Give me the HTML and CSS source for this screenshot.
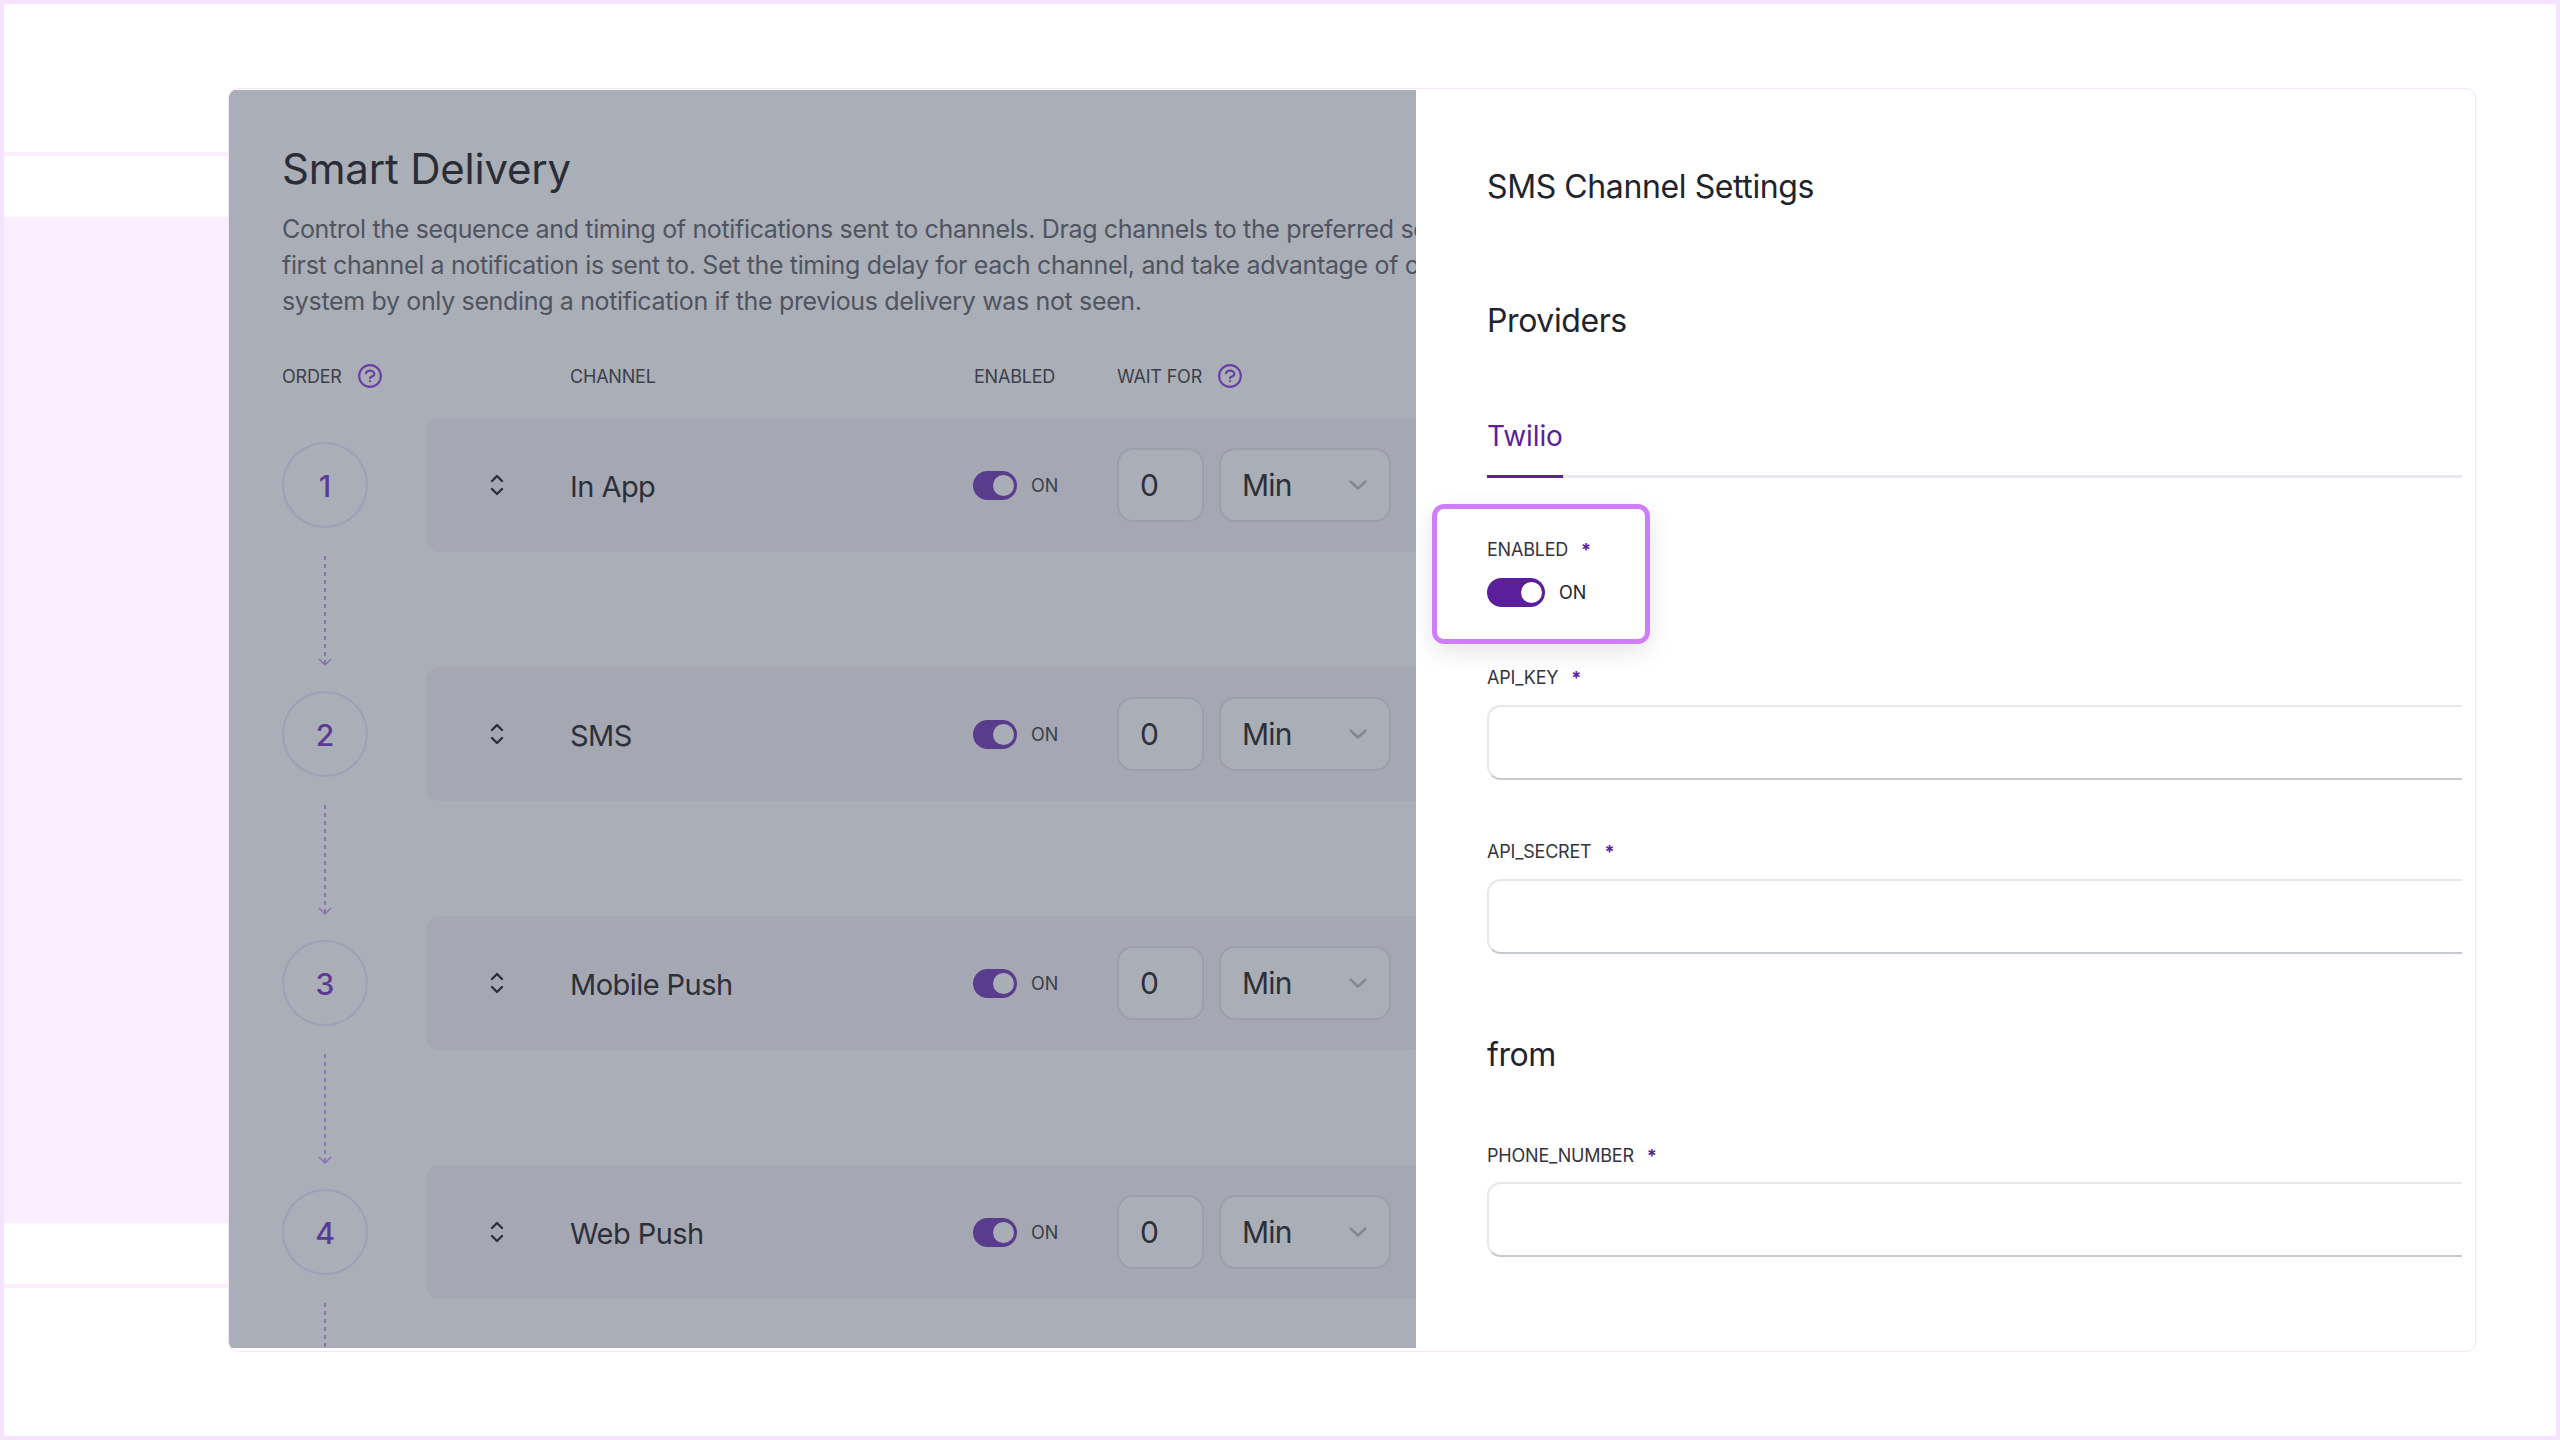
FILE: index.html
```html
<!DOCTYPE html>
<html>
<head>
    <title>SMS Channel Settings</title>
    <link rel="stylesheet" href="styles.css">
</head>
<body>
    <div class="frame">
        <div class="backdrop">
            <div class="backdrop-line first"></div>
            <div class="backdrop-block"></div>
            <div class="backdrop-line"></div>
        </div>

        <div class="card">
            <div class="delivery">
                <h1>Smart Delivery</h1>
                <p class="intro">
                    <span>Control the sequence and timing of notifications sent to channels. Drag channels to the preferred sequence. The</span>
                    <span>first channel a notification is sent to. Set the timing delay for each channel, and take advantage of our smart</span>
                    <span>system by only sending a notification if the previous delivery was not seen.</span>
                </p>

                <div class="table-head">
                    <div class="head-order">ORDER
                        <svg class="help" viewBox="0 0 24 24"><path d="M8.2 9.5c.5-1.600 2-2.500 3.800-2.500 2.200 0 4 1.300 4 3 0 1.400-1.300 2.400-3 2.800-.6.2-1 .6-1 1.200m0 2.800h.01M22 12a10 10 0 11-20 0 10 10 0 0120 0z"/></svg>
                    </div>
                    <div class="head-channel">CHANNEL</div>
                    <div class="head-enabled">ENABLED</div>
                    <div class="head-wait">WAIT FOR
                        <svg class="help" viewBox="0 0 24 24"><path d="M8.2 9.5c.5-1.600 2-2.500 3.800-2.500 2.200 0 4 1.300 4 3 0 1.400-1.300 2.400-3 2.800-.6.2-1 .6-1 1.200m0 2.800h.01M22 12a10 10 0 11-20 0 10 10 0 0120 0z"/></svg>
                    </div>
                </div>

                <div class="steps">
                    <div class="step">
                        <div class="order">
                            <div class="circle">1</div>
                            <svg class="link" viewBox="0 0 14 112"><path class="dash" d="M7 0V108"/><path d="M1 103l6 6 6-6"/></svg>
                        </div>
                        <div class="row">
                            <svg class="sort" viewBox="0 0 14 22"><path d="M2 7l5-5 5 5M2 15l5 5 5-5"/></svg>
                            <div class="name">In App</div>
                            <div class="state"><span class="toggle dim"></span><span class="state-text">ON</span></div>
                            <div class="num">0</div>
                            <div class="unit">Min<svg class="chev" viewBox="0 0 18 10"><path d="M1.500 1.500L9 8.500l7.500-7"/></svg></div>
                        </div>
                    </div>
                    <div class="step">
                        <div class="order">
                            <div class="circle">2</div>
                            <svg class="link" viewBox="0 0 14 112"><path class="dash" d="M7 0V108"/><path d="M1 103l6 6 6-6"/></svg>
                        </div>
                        <div class="row">
                            <svg class="sort" viewBox="0 0 14 22"><path d="M2 7l5-5 5 5M2 15l5 5 5-5"/></svg>
                            <div class="name">SMS</div>
                            <div class="state"><span class="toggle dim"></span><span class="state-text">ON</span></div>
                            <div class="num">0</div>
                            <div class="unit">Min<svg class="chev" viewBox="0 0 18 10"><path d="M1.500 1.500L9 8.500l7.500-7"/></svg></div>
                        </div>
                    </div>
                    <div class="step">
                        <div class="order">
                            <div class="circle">3</div>
                            <svg class="link" viewBox="0 0 14 112"><path class="dash" d="M7 0V108"/><path d="M1 103l6 6 6-6"/></svg>
                        </div>
                        <div class="row">
                            <svg class="sort" viewBox="0 0 14 22"><path d="M2 7l5-5 5 5M2 15l5 5 5-5"/></svg>
                            <div class="name">Mobile Push</div>
                            <div class="state"><span class="toggle dim"></span><span class="state-text">ON</span></div>
                            <div class="num">0</div>
                            <div class="unit">Min<svg class="chev" viewBox="0 0 18 10"><path d="M1.500 1.500L9 8.500l7.500-7"/></svg></div>
                        </div>
                    </div>
                    <div class="step">
                        <div class="order">
                            <div class="circle">4</div>
                            <svg class="link" viewBox="0 0 14 112"><path class="dash" d="M7 0V108"/><path d="M1 103l6 6 6-6"/></svg>
                        </div>
                        <div class="row">
                            <svg class="sort" viewBox="0 0 14 22"><path d="M2 7l5-5 5 5M2 15l5 5 5-5"/></svg>
                            <div class="name">Web Push</div>
                            <div class="state"><span class="toggle dim"></span><span class="state-text">ON</span></div>
                            <div class="num">0</div>
                            <div class="unit">Min<svg class="chev" viewBox="0 0 18 10"><path d="M1.500 1.500L9 8.500l7.500-7"/></svg></div>
                        </div>
                    </div>
                </div>
            </div>

            <div class="settings">
                <h2 class="settings-title">SMS Channel Settings</h2>
                <h2 class="providers">Providers</h2>
                <div class="tabs"><div class="tab">Twilio</div></div>

                <div class="enabled-box">
                    <div class="field-label">ENABLED <span class="star">*</span></div>
                    <div class="state big"><span class="toggle"></span><span class="state-text">ON</span></div>
                </div>

                <div class="field-label key-label">API_KEY <span class="star">*</span></div>
                <div class="text-input"></div>
                <div class="field-label secret-label">API_SECRET <span class="star">*</span></div>
                <div class="text-input"></div>

                <h2 class="from">from</h2>
                <div class="field-label phone-label">PHONE_NUMBER <span class="star">*</span></div>
                <div class="text-input phone-input"></div>
            </div>
        </div>
    </div>
</body>
</html>
```

FILE: styles.css
```css
* {
    box-sizing: border-box;
}

html, body {
    margin: 0;
    padding: 0;
}

body {
    font-family: Inter, "Noto Sans", sans-serif;
    background-color: #fff;
}

h1, h2, p {
    margin: 0;
    font-weight: 400;
}

.frame {
    display: flex;
    width: 2560px;
    height: 1440px;
    border: 4px solid #f5e3fd;
    background-color: #fff;
    overflow: hidden;
}

/* page behind the card */
.backdrop {
    width: 224px;
    flex-shrink: 0;
}

.backdrop-line {
    height: 4px;
    margin-top: 61px;
    background-color: #f9edfe;
}

.backdrop-line.first {
    margin-top: 148px;
}

.backdrop-block {
    height: 1006px;
    margin-top: 61px;
    background-color: #f9edfe;
}

.card {
    display: flex;
    width: 2248px;
    height: 1264px;
    margin-top: 84px;
    padding: 1px 0 3px;
    background-color: #fff;
    border: 1px solid #f5e3fd;
    border-radius: 10px;
    overflow: hidden;
}

/* left side, dimmed */
.delivery {
    width: 1187px;
    flex-shrink: 0;
    padding: 52px 0 0 53px;
    background-color: #aaaeb7;
    overflow: hidden;
}

.delivery h1 {
    font-size: 42px;
    line-height: 54px;
    letter-spacing: -0.2px;
    color: #2a2d36;
}

.intro {
    margin-top: 15px;
    font-size: 25px;
    line-height: 36px;
    letter-spacing: -0.35px;
    color: #50545f;
}

.intro span {
    display: block;
    white-space: nowrap;
}

.table-head {
    display: grid;
    grid-template-columns: 288px 404px 143px 1fr;
    align-items: center;
    height: 30px;
    margin-top: 42px;
    font-size: 18px;
    letter-spacing: -0.2px;
    color: #3c3f49;
}

.head-order,
.head-wait {
    display: flex;
    align-items: center;
    gap: 15px;
}

.help {
    width: 26px;
    height: 26px;
    fill: none;
    stroke: #6b3fa6;
    stroke-width: 2;
    stroke-linecap: round;
    stroke-linejoin: round;
}

.steps {
    margin-top: 27px;
}

.step {
    display: grid;
    grid-template-columns: 86px 1000px;
    column-gap: 58px;
    height: 249px;
}

.order {
    display: flex;
    flex-direction: column;
    align-items: center;
    padding-top: 24px;
}

.circle {
    display: flex;
    align-items: center;
    justify-content: center;
    width: 86px;
    height: 86px;
    flex-shrink: 0;
    padding-top: 2px;
    border: 2px solid #a09fb8;
    border-radius: 50%;
    font-size: 30px;
    font-weight: 500;
    color: #5c3a94;
}

.link {
    width: 14px;
    height: 112px;
    margin-top: 28px;
    flex-shrink: 0;
    fill: none;
    stroke: #8a72ae;
    stroke-width: 1.5;
}

.link .dash {
    stroke-dasharray: 4 4;
    stroke-width: 2;
}

.row {
    display: grid;
    grid-template-columns: 144px 403px 144px 102px 172px;
    align-items: center;
    height: 134px;
    background-color: #a5a7b2;
    border-radius: 14px;
}

.sort {
    width: 14px;
    height: 22px;
    margin-left: 64px;
    fill: none;
    stroke: #2d3039;
    stroke-width: 2.4;
    stroke-linecap: round;
    stroke-linejoin: round;
}

.name {
    padding-top: 2px;
    font-size: 29px;
    letter-spacing: -0.55px;
    color: #2d3039;
}

.state {
    display: flex;
    align-items: center;
    gap: 14px;
}

.state-text {
    font-size: 18px;
    color: #3c3f49;
}

.toggle {
    position: relative;
    display: block;
    width: 44px;
    height: 29px;
    border-radius: 15px;
    background-color: #5a3c8c;
}

.toggle::after {
    content: "";
    position: absolute;
    top: 4px;
    right: 3px;
    width: 21px;
    height: 21px;
    border-radius: 50%;
    background-color: #a9adb6;
}

.num,
.unit {
    display: flex;
    align-items: center;
    height: 74px;
    border: 2px solid #9c9fab;
    border-radius: 16px;
    background-color: #aaaeb7;
    font-size: 30px;
    letter-spacing: -0.8px;
    color: #2d3039;
}

.num {
    width: 87px;
    padding-left: 21px;
}

.unit {
    justify-content: space-between;
    width: 172px;
    padding: 0 22px 0 21px;
}

.chev {
    width: 18px;
    height: 10px;
    fill: none;
    stroke: #828793;
    stroke-width: 2.4;
    stroke-linecap: round;
    stroke-linejoin: round;
}

/* right side */
.settings {
    flex: 1;
    min-width: 0;
    margin-right: 13px;
    padding: 75px 0 0 71px;
    overflow: hidden;
}

.settings h2 {
    font-size: 32px;
    line-height: 44px;
    letter-spacing: -0.4px;
    color: #22242c;
}

.providers {
    margin-top: 90px;
}

.tabs {
    margin-top: 71px;
    border-bottom: 3px solid #e8eaef;
}

.tab {
    display: inline-block;
    height: 64px;
    margin-bottom: -3px;
    border-bottom: 3px solid #5b1f9c;
    font-size: 28px;
    line-height: 44px;
    letter-spacing: -0.1px;
    color: #5b1f9c;
}

.enabled-box {
    width: 218px;
    height: 140px;
    margin: 26px 0 0 -55px;
    padding: 30px 0 0 50px;
    border: 5px solid #cf7dfc;
    border-radius: 12px;
    box-shadow: 0 8px 24px rgba(0, 0, 0, 0.1);
}

.field-label {
    font-size: 18px;
    line-height: 22px;
    letter-spacing: -0.2px;
    color: #33353e;
}

.star {
    margin-left: 8px;
    font-weight: 700;
    color: #5b1f9c;
}

.big {
    margin-top: 17px;
}

.big .toggle {
    width: 58px;
    background-color: #5b1f9c;
}

.big .toggle::after {
    background-color: #fff;
}

.big .state-text {
    color: #22242c;
}

.key-label {
    margin-top: 23px;
}

.secret-label {
    margin-top: 61px;
}

.phone-label {
    margin-top: 68px;
}

.text-input {
    width: 1200px;
    height: 75px;
    margin-top: 16px;
    border: 2px solid #e5e7eb;
    border-bottom-color: #c5c9d1;
    border-radius: 14px;
    background-color: #fff;
}

.phone-input {
    margin-top: 15px;
}

.from {
    margin-top: 79px;
}
```
